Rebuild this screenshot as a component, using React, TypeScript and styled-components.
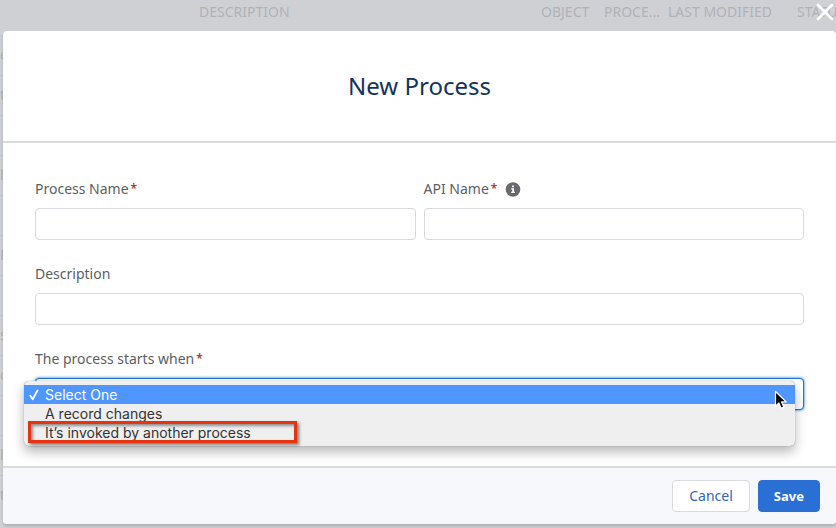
import React from "react";
import styled, { createGlobalStyle } from "styled-components";

const GlobalStyle = createGlobalStyle`
  *, *::before, *::after { box-sizing: border-box; }
  body {
    margin: 0;
    background: #cfd0d4;
    font-family: "Noto Sans", "Open Sans", sans-serif;
    font-size: 14px;
    color: #5c5e63;
  }
  button, input, select { font: inherit; }
`;

const Page = styled.main`
  display: grid;
  min-height: 100vh;
  overflow: hidden;
`;

const Backdrop = styled.div`
  grid-area: 1 / 1;
  min-width: 0;
  height: 100vh;
  overflow: hidden;
`;

const ProcessTable = styled.table`
  width: 100%;
  table-layout: fixed;
  border-collapse: collapse;
  color: #b0b2b8;
`;

const HeadCell = styled.th<{ $width?: number }>`
  width: ${(p) => (p.$width ? `${p.$width}px` : "auto")};
  height: 35px;
  padding: 2px 0 0;
  vertical-align: top;
  font-size: 14px;
  line-height: 20px;
  font-weight: 400;
  text-align: left;
  white-space: nowrap;
`;

const BodyCell = styled.td`
  height: 40px;
  padding: 0;
  border-top: 1px solid #c6c7cc;
  line-height: 20px;
`;

const Overlay = styled.div`
  grid-area: 1 / 1;
  min-width: 0;
  position: relative;
  padding: 31px 0 4px 3px;
`;

const CloseButton = styled.button`
  position: absolute;
  top: 3px;
  right: 2px;
  display: flex;
  padding: 0;
  border: 0;
  background: none;
  color: #fff;
`;

const Dialog = styled.section`
  border-radius: 4px;
  background: #fff;
  box-shadow: 0 2px 3px rgba(0, 0, 0, 0.16);
`;

const DialogHeader = styled.header`
  display: flex;
  align-items: center;
  justify-content: center;
  height: 112px;
  border-bottom: 2px solid #d9dbdd;
`;

const Title = styled.h1`
  margin: 0;
  font-size: 24px;
  line-height: 32px;
  font-weight: 400;
  color: #16325c;
`;

const Form = styled.form`
  display: grid;
  grid-template-columns: 1fr 1fr;
  gap: 24px 8px;
  padding: 36px 32px 56px;
`;

const Field = styled.div<{ $wide?: boolean }>`
  grid-column: ${(p) => (p.$wide ? "1 / -1" : "auto")};
  min-width: 0;
`;

const LabelRow = styled.div`
  display: flex;
  align-items: center;
  height: 20px;
  margin-bottom: 9px;
`;

const Label = styled.label`
  line-height: 20px;
`;

const Required = styled.abbr`
  margin-left: 2px;
  font-size: 12px;
  font-weight: 600;
  line-height: 20px;
  color: #b5342c;
  text-decoration: none;
`;

const InfoButton = styled.button`
  display: flex;
  margin-left: 8px;
  padding: 0;
  border: 0;
  background: none;
`;

const TextInput = styled.input`
  display: block;
  width: 100%;
  height: 32px;
  padding: 0 12px;
  border: 1px solid #d8dadd;
  border-radius: 4px;
  background: #fff;
`;

const SelectBox = styled.div`
  position: relative;
`;

const Select = styled.select`
  display: block;
  appearance: none;
  width: 100%;
  height: 32px;
  padding: 0 12px;
  border: 1px solid #1f74d6;
  border-radius: 4px;
  background: #fff;
  box-shadow: 0 0 3px #0070d2;
  outline: none;
`;

const Menu = styled.ul`
  position: absolute;
  z-index: 1;
  top: 3px;
  left: -11px;
  right: 9px;
  margin: 0;
  padding: 4px 0;
  border-radius: 5px;
  background: #efefef;
  box-shadow: 0 0 1px rgba(0, 0, 0, 0.5), 0 6px 12px rgba(0, 0, 0, 0.28);
  list-style: none;
`;

const MenuItem = styled.li<{ $selected?: boolean }>`
  position: relative;
  display: flex;
  align-items: center;
  height: 19px;
  padding-left: 5px;
  background: ${(p) => (p.$selected ? "#4f97ff" : "transparent")};
  color: ${(p) => (p.$selected ? "#fff" : "#333")};
  font-family: Inter, Roboto, "Liberation Sans", sans-serif;
  font-size: 14px;
  line-height: 19px;
`;

const CheckSlot = styled.span`
  display: flex;
  width: 16px;
`;

const Highlight = styled.span`
  position: absolute;
  top: -2px;
  left: 4px;
  width: 269px;
  height: 22px;
  border: 3px solid #e5340f;
  box-shadow: 2px 2px 3px rgba(0, 0, 0, 0.5), inset 2px 2px 3px rgba(0, 0, 0, 0.4);
`;

const Pointer = styled.svg`
  position: absolute;
  top: 9px;
  right: 7px;
`;

const DialogFooter = styled.footer`
  display: flex;
  justify-content: flex-end;
  gap: 8px;
  padding: 12px 16px;
  border-top: 2px solid #d9dbdd;
  border-radius: 0 0 4px 4px;
  background: #f7f8fb;
`;

const Button = styled.button<{ $primary?: boolean }>`
  height: 32px;
  padding: 0 ${(p) => (p.$primary ? "15px" : "16px")};
  border: 1px solid ${(p) => (p.$primary ? "#2a6fd3" : "#d8dadd")};
  border-radius: 4px;
  background: ${(p) => (p.$primary ? "#2a6fd3" : "#fff")};
  color: ${(p) => (p.$primary ? "#fff" : "#3564bf")};
  font-size: ${(p) => (p.$primary ? "13px" : "14px")};
  font-weight: ${(p) => (p.$primary ? 700 : 400)};
  line-height: 30px;
`;

const columns = [
  { text: "", width: 199 },
  { text: "DESCRIPTION" },
  { text: "OBJECT", width: 63 },
  { text: "PROCE...", width: 64 },
  { text: "LAST MODIFIED", width: 129 },
  { text: "STATUS", width: 39 },
];

const rows = ["e", "t", "", "h", "", "P", "", "s", "o", "", "l", "t"];

const options = ["Select One", "A record changes", "It’s invoked by another process"];

function RequiredMark() {
  return <Required title="required">*</Required>;
}

export default function App() {
  return (
    <Page>
      <GlobalStyle />
      <Backdrop>
        <ProcessTable>
          <thead>
            <tr>
              {columns.map((c, i) => (
                <HeadCell key={i} $width={c.width}>{c.text}</HeadCell>
              ))}
            </tr>
          </thead>
          <tbody>
            {rows.map((text, i) => (
              <tr key={i}>
                <BodyCell colSpan={columns.length}>{text}</BodyCell>
              </tr>
            ))}
          </tbody>
        </ProcessTable>
      </Backdrop>
      <Overlay>
        <CloseButton type="button" aria-label="Close">
          <svg width="18" height="18" viewBox="0 0 18 18" fill="none" stroke="currentColor" strokeWidth="2.6" strokeLinecap="round">
            <path d="M2 2l14 14M16 2L2 16" />
          </svg>
        </CloseButton>
        <Dialog role="dialog" aria-labelledby="dialog-title">
          <DialogHeader>
            <Title id="dialog-title">New Process</Title>
          </DialogHeader>
          <Form id="process-form">
            <Field>
              <LabelRow>
                <Label htmlFor="process-name">Process Name</Label>
                <RequiredMark />
              </LabelRow>
              <TextInput id="process-name" type="text" />
            </Field>
            <Field>
              <LabelRow>
                <Label htmlFor="api-name">API Name</Label>
                <RequiredMark />
                <InfoButton type="button" aria-label="API name help">
                  <svg width="16" height="16" viewBox="0 0 16 16">
                    <circle cx="8" cy="8.5" r="7.3" fill="#67696d" />
                    <path d="M7 4.4h2v1.8H7zM6.2 7.2H9v3.6h1v1.2H6.2v-1.2h1V8.4h-1z" fill="#fff" />
                  </svg>
                </InfoButton>
              </LabelRow>
              <TextInput id="api-name" type="text" />
            </Field>
            <Field $wide>
              <LabelRow>
                <Label htmlFor="description">Description</Label>
              </LabelRow>
              <TextInput id="description" type="text" />
            </Field>
            <Field $wide>
              <LabelRow>
                <Label htmlFor="starts-when">The process starts when</Label>
                <RequiredMark />
              </LabelRow>
              <SelectBox>
                <Select id="starts-when">
                  {options.map((o) => (
                    <option key={o}>{o}</option>
                  ))}
                </Select>
                <Menu role="listbox" aria-label="The process starts when">
                  {options.map((o, i) => (
                    <MenuItem key={o} role="option" aria-selected={i === 0} $selected={i === 0}>
                      <CheckSlot>
                        {i === 0 && (
                          <svg width="10" height="12" viewBox="0 0 10 12" fill="none" stroke="#fff" strokeWidth="1.9" strokeLinecap="round" strokeLinejoin="round">
                            <path d="M1.3 6.8l2.4 3.4L8.4 1.6" />
                          </svg>
                        )}
                      </CheckSlot>
                      {o}
                      {i === 2 && <Highlight />}
                    </MenuItem>
                  ))}
                  <Pointer width="14" height="20" viewBox="0 0 14 20">
                    <path
                      d="M1.5 1.5v14.6l3.4-3.2 2.3 5.3 2.6-1.1-2.2-5.2h4.6z"
                      fill="#000"
                      stroke="#fff"
                      strokeWidth="1.2"
                      strokeLinejoin="round"
                    />
                  </Pointer>
                </Menu>
              </SelectBox>
            </Field>
          </Form>
          <DialogFooter>
            <Button type="button">Cancel</Button>
            <Button type="submit" form="process-form" $primary>Save</Button>
          </DialogFooter>
        </Dialog>
      </Overlay>
    </Page>
  );
}
